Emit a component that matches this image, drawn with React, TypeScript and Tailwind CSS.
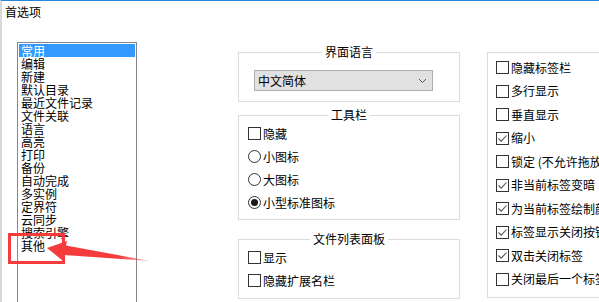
import React from "react";

const font = { fontFamily: '"Noto Sans CJK SC", "Noto Sans", sans-serif' };

const listItems = [
  "常用", "编辑", "新建", "默认目录", "最近文件记录", "文件关联", "语言", "高亮",
  "打印", "备份", "自动完成", "多实例", "定界符", "云同步", "搜索引擎", "其他",
];

function Check({ checked }: { checked?: boolean }) {
  return (
    <span className="w-[13px] h-[13px] border border-[#333333] bg-white flex items-center justify-center shrink-0">
      {checked && (
        <svg width="11" height="11" viewBox="0 0 11 11">
          <path d="M1.5 5.5 L4.2 8.2 L9.5 2.5" fill="none" stroke="#555" strokeWidth="1.1" />
        </svg>
      )}
    </span>
  );
}

function Radio({ checked }: { checked?: boolean }) {
  return (
    <span className="w-[13px] h-[13px] rounded-full border border-[#333333] bg-white flex items-center justify-center shrink-0">
      {checked && <span className="w-[7px] h-[7px] rounded-full bg-[#1a1a1a]" />}
    </span>
  );
}

function Row({ kind, checked, label, h = "h-[23px]" }: { kind: "c" | "r"; checked?: boolean; label: string; h?: string }) {
  return (
    <div className={`${h} flex items-center gap-[2px] whitespace-nowrap text-[12px] leading-[14px] text-black`}>
      {kind === "c" ? <Check checked={checked} /> : <Radio checked={checked} />}
      <span>{label}</span>
    </div>
  );
}

function GroupTitle({ text }: { text: string }) {
  return (
    <div className="-mt-[8px] h-[14px] flex justify-center">
      <span className="bg-white px-[3px] text-[12px] leading-[14px] text-black">{text}</span>
    </div>
  );
}

export default function App() {
  const right: [string, boolean][] = [
    ["隐藏标签栏", false],
    ["多行显示", false],
    ["垂直显示", false],
    ["缩小", true],
    ["锁定 (不允许拖放标签)", false],
    ["非当前标签变暗", true],
    ["为当前标签绘制颜色", true],
    ["标签显示关闭按钮", true],
    ["双击关闭标签", true],
    ["关闭最后一个标签时退出", false],
  ];
  return (
    <div
      className="relative w-[599px] h-[302px] bg-white overflow-hidden border-t border-[#2a86d6] border-l-2 border-l-[#dadada] box-border"
      style={font}
    >
      <div className="pl-[3px] pt-[4px] h-[20px] text-[12px] leading-[14px] text-black">首选项</div>
      <div className="flex items-start">
        {/* list */}
        <div className="ml-[15px] mt-[21px] w-[120px] h-[270px] border border-[#828790] p-[1px] shrink-0">
          {listItems.map((t, i) => (
            <div
              key={t}
              className={`h-[13px] pl-[2px] text-[12px] leading-[13px] whitespace-nowrap ${
                i === 0 ? "bg-[#3399ff] text-white" : "text-black"
              }`}
            >
              {t}
            </div>
          ))}
        </div>

        {/* middle */}
        <div className="ml-[101px] mt-[31px] w-[222px] flex flex-col shrink-0">
          <div className="h-[50px] border border-[#dcdcdc]">
            <GroupTitle text="界面语言" />
            <div className="mt-[11px] ml-[15px] w-[179px] h-[21px] bg-[#e1e1e1] border border-[#adadad] flex items-center justify-between px-[3px] text-[12px] leading-[14px] text-black">
              <span>中文简体</span>
              <svg width="9" height="6" viewBox="0 0 9 6" className="mr-[2px]">
                <path d="M1 1 L4.5 4.5 L8 1" fill="none" stroke="#555" strokeWidth="1" />
              </svg>
            </div>
          </div>
          <div className="mt-[13px] h-[105px] border border-[#dcdcdc] pl-[9px]">
            <div className="-ml-[9px]">
              <GroupTitle text="工具栏" />
            </div>
            <Row kind="c" label="隐藏" />
            <Row kind="r" label="小图标" />
            <Row kind="r" label="大图标" />
            <Row kind="r" checked label="小型标准图标" />
          </div>
          <div className="mt-[19px] h-[60px] border border-[#dcdcdc] pl-[9px]">
            <div className="-ml-[9px]">
              <GroupTitle text="文件列表面板" />
            </div>
            <Row kind="c" label="显示" />
            <Row kind="c" label="隐藏扩展名栏" />
          </div>
        </div>

        {/* right */}
        <div className="ml-[27px] mt-[31px] w-[150px] h-[246px] border border-[#dcdcdc] pl-[8px] pt-[3px] shrink-0 overflow-hidden">
          {right.map(([t, c]) => (
            <Row key={t} kind="c" checked={c} label={t} h="h-[23.5px]" />
          ))}
        </div>
      </div>

      {/* annotation overlay */}
      <div className="absolute left-[6px] top-[232px] w-[57px] h-[31px] border-[3px] border-[#f53b3b]" />
      <svg className="absolute left-0 top-0" width="599" height="302" viewBox="0 0 599 302" style={{ pointerEvents: "none" }}>
        <defs>
          <linearGradient id="ag" x1="0" y1="0" x2="1" y2="0">
            <stop offset="0" stopColor="#f53b3b" />
            <stop offset="0.7" stopColor="#f53b3b" />
            <stop offset="1" stopColor="#f53b3b" stopOpacity="0.3" />
          </linearGradient>
        </defs>
        <polygon
          points="47,248 67,241 66,245.5 150,261 64,255 62,260"
          transform="translate(-2,-1)"
          fill="url(#ag)"
        />
      </svg>
    </div>
  );
}
